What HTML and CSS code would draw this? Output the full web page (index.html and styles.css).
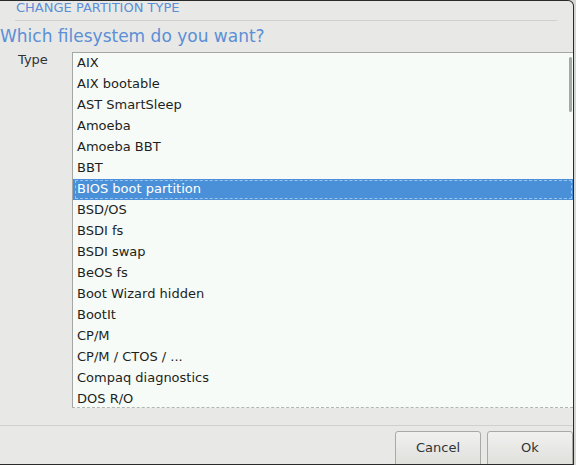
FILE: index.html
```html
<!DOCTYPE html>
<html lang="en">
<head>
    <meta charset="UTF-8">
    <title>Change partition type</title>
    <link rel="stylesheet" href="styles.css">
</head>
<body>
    <div class="dialog">
        <div class="dialog-title">CHANGE PARTITION TYPE</div>
        <h1 class="question">Which filesystem do you want?</h1>
        <div class="field">
            <div class="field-label">Type</div>
            <div class="list-box">
                <ul class="list">
                    <li>AIX</li>
                    <li>AIX bootable</li>
                    <li>AST SmartSleep</li>
                    <li>Amoeba</li>
                    <li>Amoeba BBT</li>
                    <li>BBT</li>
                    <li class="selected"><span>BIOS boot partition</span></li>
                    <li>BSD/OS</li>
                    <li>BSDI fs</li>
                    <li>BSDI swap</li>
                    <li>BeOS fs</li>
                    <li>Boot Wizard hidden</li>
                    <li>BootIt</li>
                    <li>CP/M</li>
                    <li>CP/M / CTOS / ...</li>
                    <li>Compaq diagnostics</li>
                    <li>DOS R/O</li>
                </ul>
                <div class="scrollbar"></div>
            </div>
        </div>
        <div class="actions">
            <button class="btn">Cancel</button>
            <button class="btn">Ok</button>
        </div>
    </div>
</body>
</html>
```

FILE: styles.css
```css
body {
    margin: 0;
    background: #d6d6d4;
    font-family: 'DejaVu Sans', sans-serif;
    width: 576px;
    height: 465px;
    overflow: hidden;
}
.dialog {
    width: 573px;
    height: 463px;
    background: #e8e8e7;
    border-top: 1px solid #2a2a2a;
    border-right: 1px solid #2a2a2a;
    border-bottom: 1px solid #2a2a2a;
    border-top-right-radius: 6px;
    display: flex;
    flex-direction: column;
    overflow: hidden;
}
.dialog > * {
    flex-shrink: 0;
}
.dialog-title {
    margin: 0 16px 0 15px;
    padding: 0 0 0 1px;
    height: 19px;
    line-height: 14px;
    font-size: 13px;
    color: #5b8fd6;
    border-bottom: 1px solid #d0d0ce;
}
.question {
    margin: 4px 0 0;
    font-size: 17px;
    font-weight: normal;
    line-height: 22px;
    color: #5b8fd6;
    height: 27px;
}
.field {
    display: flex;
    align-items: flex-start;
}
.field-label {
    width: 72px;
    padding: 0 0 0 18px;
    box-sizing: border-box;
    font-size: 13px;
    line-height: 16px;
    color: #2e3436;
}
.list-box {
    position: relative;
    flex: 1;
    height: 354px;
    background: #f6fbf7;
    border-top: 1px solid #a4a7a3;
    border-left: 1px solid #a4a7a3;
    border-bottom: 1px dashed #b2b5b1;
    overflow: hidden;
}
.list {
    list-style: none;
    margin: 0;
    padding: 0;
}
.list li {
    height: 21px;
    line-height: 19px;
    padding: 0 0 0 4px;
    font-size: 13px;
    color: #1d1f1d;
}
.list li.selected {
    background: #4a90d9;
    color: #ffffff;
    padding: 1px 1px 1px 2px;
    height: 19px;
}
.list li.selected span {
    display: block;
    height: 17px;
    line-height: 15px;
    padding-left: 1px;
    border: 1px dashed #9cc3ec;
}
.scrollbar {
    position: absolute;
    top: 4px;
    right: 1px;
    width: 3px;
    height: 55px;
    background: #a4aaa4;
    border-radius: 2px;
}
.actions {
    margin-top: 17px;
    border-top: 1px solid #d0d0ce;
    display: flex;
    justify-content: flex-end;
    gap: 6px;
    padding-top: 5px;
}
.btn {
    width: 86px;
    height: 40px;
    font-family: 'DejaVu Sans', sans-serif;
    font-size: 13px;
    color: #2e3436;
    background: linear-gradient(to bottom, #f1f1ef, #dcdcd9);
    border: 1px solid #a8aaa6;
    border-radius: 3px;
    padding: 0 0 8px;
}
```
